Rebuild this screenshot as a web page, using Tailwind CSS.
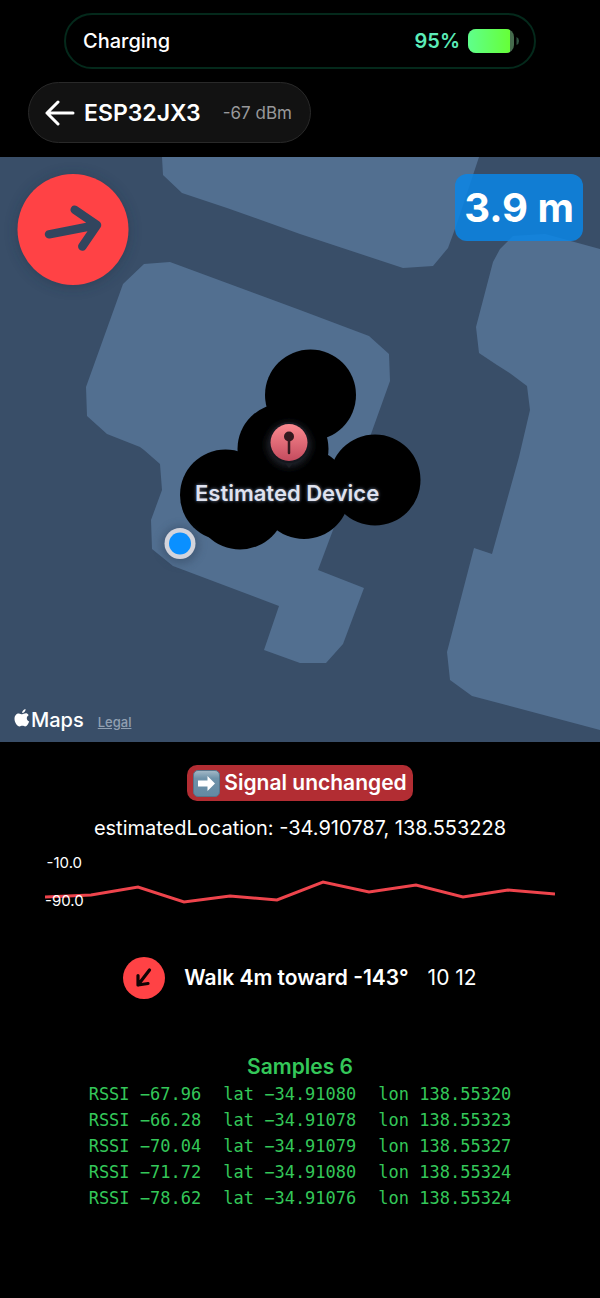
<!DOCTYPE html>
<html lang="en">
<head>
    <meta charset="UTF-8">
    <meta name="viewport" content="width=device-width, initial-scale=1.0">
    <title>ESP32JX3</title>
    <script src="https://cdn.jsdelivr.net/npm/@tailwindcss/browser@4"></script>
</head>
<body class="bg-black text-white min-h-screen font-['Inter',sans-serif]">

    <!-- Charging status -->
    <div class="mx-16 mt-[13px] h-14 pl-[17px] pr-[14px] flex items-center justify-between rounded-full border-2 border-[#04291b]">
        <span class="text-xl font-medium">Charging</span>
        <div class="flex items-center gap-2">
            <span class="text-xl font-semibold text-[#5cecb8]">95%</span>
            <svg class="w-[52px] h-6" viewBox="0 0 52 24" aria-hidden="true">
                <defs>
                    <linearGradient id="charge" x1="0" x2="1">
                        <stop offset="0" stop-color="#5fff8c"/>
                        <stop offset="1" stop-color="#66ff38"/>
                    </linearGradient>
                    <clipPath id="cell"><rect width="46" height="24" rx="8"/></clipPath>
                </defs>
                <g clip-path="url(#cell)">
                    <rect width="46" height="24" fill="#456b4d"/>
                    <rect width="42" height="24" fill="url(#charge)"/>
                </g>
                <path d="M48.500 8q2.500 1 2.500 4t-2.500 4z" fill="#2f5140"/>
            </svg>
        </div>
    </div>

    <!-- Back to the device list -->
    <header class="px-7 mt-[13px]">
        <button type="button" class="h-[61px] pl-4 pr-[18px] flex items-center rounded-full bg-[#121212] border border-[#292929]">
            <svg class="w-[30px] h-[26px] mr-[9px]" viewBox="0 0 30 26" fill="none" stroke="#fff" stroke-width="3" stroke-linecap="round" stroke-linejoin="round" aria-hidden="true">
                <path d="M28 13H2M13 2 2 13l11 11"/>
            </svg>
            <span class="text-[23px] leading-8 font-semibold">ESP32JX3</span>
            <span class="ml-[22px] text-[17px] leading-7 text-[#98989a]">-67 dBm</span>
        </button>
    </header>

    <!-- Map -->
    <main>
        <section class="relative mt-[14px] h-[585px] overflow-hidden bg-[#394e68]" aria-label="Map">
            <svg class="w-full h-full" viewBox="0 157 600 585" preserveAspectRatio="xMidYMid slice" aria-hidden="true">
                <defs>
                    <linearGradient id="pin" x1="0" x2="0" y1="0" y2="1">
                        <stop offset="0" stop-color="#fb8a90"/>
                        <stop offset="1" stop-color="#c44b5e"/>
                    </linearGradient>
                    <filter id="shadow" x="-50%" y="-50%" width="200%" height="200%">
                        <feGaussianBlur stdDeviation="7"/>
                    </filter>
                    <filter id="glow" x="-50%" y="-50%" width="200%" height="200%">
                        <feGaussianBlur stdDeviation="4"/>
                    </filter>
                </defs>

                <!-- buildings -->
                <g fill="#526f90">
                    <path d="M162 157 163 175 182 193 227 208 300 234 403 268 433 266 448 248 455 229 479 157Z"/>
                    <path d="M144 264 170 262 300 310 369 336 389 354 390 381 371 434 333 530 318 570 364 588 343 644 326 663 300 663 264 650 279 606 173 566 152 549 151 520 162 490 160 464 144 450 140 447 107 434 87 416 86 387 123 284Z"/>
                    <path d="M600 249 545 234 513 236 500 249 493 262 476 327 479 353 497 365 511 374 527 386 530 410 519 457 492 554 474 548 447 652 450 680 472 696 600 730Z"/>
                </g>

                <!-- sample positions -->
                <g>
                    <circle cx="310.500" cy="395" r="45.500"/>
                    <circle cx="283" cy="449" r="45.500"/>
                    <circle cx="225.500" cy="495" r="45.500"/>
                    <circle cx="240" cy="504" r="45.500"/>
                    <circle cx="304" cy="493.500" r="45.500"/>
                    <circle cx="375" cy="480" r="45.500"/>
                </g>

                <!-- estimated device pin -->
                <circle cx="289" cy="445" r="21" fill="#272c36" filter="url(#glow)"/>
                <path d="M284 462h10l-5 6z" fill="#1b1e24"/>
                <circle cx="289" cy="442.500" r="20.500" fill="#15171e"/>
                <circle cx="289" cy="442.500" r="18.500" fill="url(#pin)"/>
                <circle cx="289" cy="436.500" r="5" fill="#33191f"/>
                <path d="M289 440v13" stroke="#33191f" stroke-width="2.500" stroke-linecap="round"/>

                <!-- user location -->
                <circle cx="180" cy="545" r="19" fill="#2b3d55" opacity=".4" filter="url(#glow)"/>
                <circle cx="180" cy="543.500" r="15.500" fill="#d3d4dc"/>
                <circle cx="180" cy="543.500" r="11" fill="#0a90ff"/>
            </svg>

            <p class="absolute top-[322px] left-1/2 -translate-x-[105px] text-[22px] leading-7 font-semibold whitespace-nowrap text-[#dfe2ef] [text-shadow:0_0_2px_#39404f,0_0_3px_#39404f,0_0_4px_#39404f]">Estimated Device</p>

            <!-- direction arrow -->
            <svg class="absolute top-0 left-0 w-[146px] h-[146px]" viewBox="0 157 146 146" role="img" aria-label="Direction">
                <circle cx="73" cy="231" r="55" fill="#1f2d42" opacity=".45" filter="url(#shadow)"/>
                <circle cx="73" cy="229.500" r="55.500" fill="#ff4245"/>
                <path d="M49 234.300 97 225M74.700 209.800 97 225 82.300 246.500" fill="none" stroke="#32455e" stroke-width="8.500" stroke-linecap="round" stroke-linejoin="round"/>
            </svg>

            <div class="absolute top-[17px] right-[17px] h-[67px] px-[9px] flex items-center rounded-xl bg-[#0a86e6]/85 text-[40px] font-bold">3.9 m</div>

            <div class="absolute bottom-2 left-[14px] flex items-baseline">
                <svg class="w-4 h-[18px] mr-px" viewBox="0 0 16 18" fill="#fff" aria-hidden="true">
                    <path d="M11.600 0c.2 2-1.600 4-3.500 4C7.900 2.200 9.700.2 11.600 0z"/>
                    <path d="M14.600 6.200c-2.700 1.700-2.200 5.200.6 6.300-.7 2-2.300 4.900-4 4.900-1 0-1.500-.6-2.800-.6s-1.800.6-2.800.6C3.200 17.400.5 13.400.5 9.700c0-3.300 2-5.300 4.300-5.300 1.400 0 2.300.8 3.400.8 1 0 2-.9 3.600-.9 1.100 0 2.200.6 2.800 1.900z"/>
                </svg>
                <span class="text-xl font-medium">Maps</span>
                <a href="#" class="ml-[14px] text-[13px] font-medium text-[#91a0b2] underline">Legal</a>
            </div>
        </section>

        <!-- Signal -->
        <section class="mt-[23px] flex flex-col items-center">
            <div class="h-9 px-[6px] flex items-center gap-1 rounded-[10px] bg-[#b22d33] text-[21px] font-semibold">
                <svg class="w-[27px] h-[27px]" viewBox="0 0 27 27" aria-hidden="true">
                    <defs>
                        <linearGradient id="key" x1="0" x2="0" y1="0" y2="1">
                            <stop offset="0" stop-color="#a5bac8"/>
                            <stop offset=".3" stop-color="#6f93aa"/>
                            <stop offset="1" stop-color="#6389a3"/>
                        </linearGradient>
                    </defs>
                    <rect x=".5" y=".5" width="26" height="26" rx="4.500" fill="url(#key)" stroke="#58748a"/>
                    <path d="M5 10.500h9.500V6L22 13.500 14.500 21v-4.500H5z" fill="#fff"/>
                </svg>
                Signal unchanged
            </div>
            <p class="mt-[13px] text-xl leading-7">estimatedLocation: -34.910787, 138.553228</p>
        </section>

        <!-- RSSI chart -->
        <section class="relative mt-3 mx-[45px] h-[56px]" aria-label="RSSI chart">
            <svg class="absolute inset-0 w-full h-full" viewBox="45 854 510 56" preserveAspectRatio="none" aria-hidden="true">
                <polyline points="45,897 91,895 138,887 184,902 230,896 277,900 323,882 369,892 416,885 463,897 508,890 555,894" fill="none" stroke="#ee444c" stroke-width="3"/>
            </svg>
            <div class="relative h-full w-fit flex flex-col items-center justify-between text-[15px] leading-[18px]">
                <span>-10.0</span>
                <span>-90.0</span>
            </div>
        </section>

        <!-- Walking hint -->
        <section class="mt-[47px] flex items-center justify-center gap-[19px] text-[21px]">
            <svg class="w-[42px] h-[42px]" viewBox="124 957 42 42" aria-hidden="true">
                <circle cx="145" cy="978" r="21" fill="#ff4245"/>
                <path d="M150.500 970 139 985M139 975.500V985L149 983.500" fill="none" stroke="#110405" stroke-width="3.200" stroke-linecap="round" stroke-linejoin="round"/>
            </svg>
            <span class="font-semibold">Walk 4m toward -143°</span>
            <span>10 12</span>
        </section>

        <!-- Samples -->
        <section class="mt-[54px] pb-20 text-[#34c759]">
            <h2 class="text-center text-[21px] leading-7 font-semibold">Samples 6</h2>
            <table class="mx-auto font-['DejaVu_Sans_Mono',monospace] text-[17px] leading-[26px] whitespace-nowrap">
                <tbody>
                    <tr><td class="pr-[22px]">RSSI −67.96</td><td class="pr-[22px]">lat −34.91080</td><td>lon 138.55320</td></tr>
                    <tr><td>RSSI −66.28</td><td>lat −34.91078</td><td>lon 138.55323</td></tr>
                    <tr><td>RSSI −70.04</td><td>lat −34.91079</td><td>lon 138.55327</td></tr>
                    <tr><td>RSSI −71.72</td><td>lat −34.91080</td><td>lon 138.55324</td></tr>
                    <tr><td>RSSI −78.62</td><td>lat −34.91076</td><td>lon 138.55324</td></tr>
                </tbody>
            </table>
        </section>
    </main>

</body>
</html>
